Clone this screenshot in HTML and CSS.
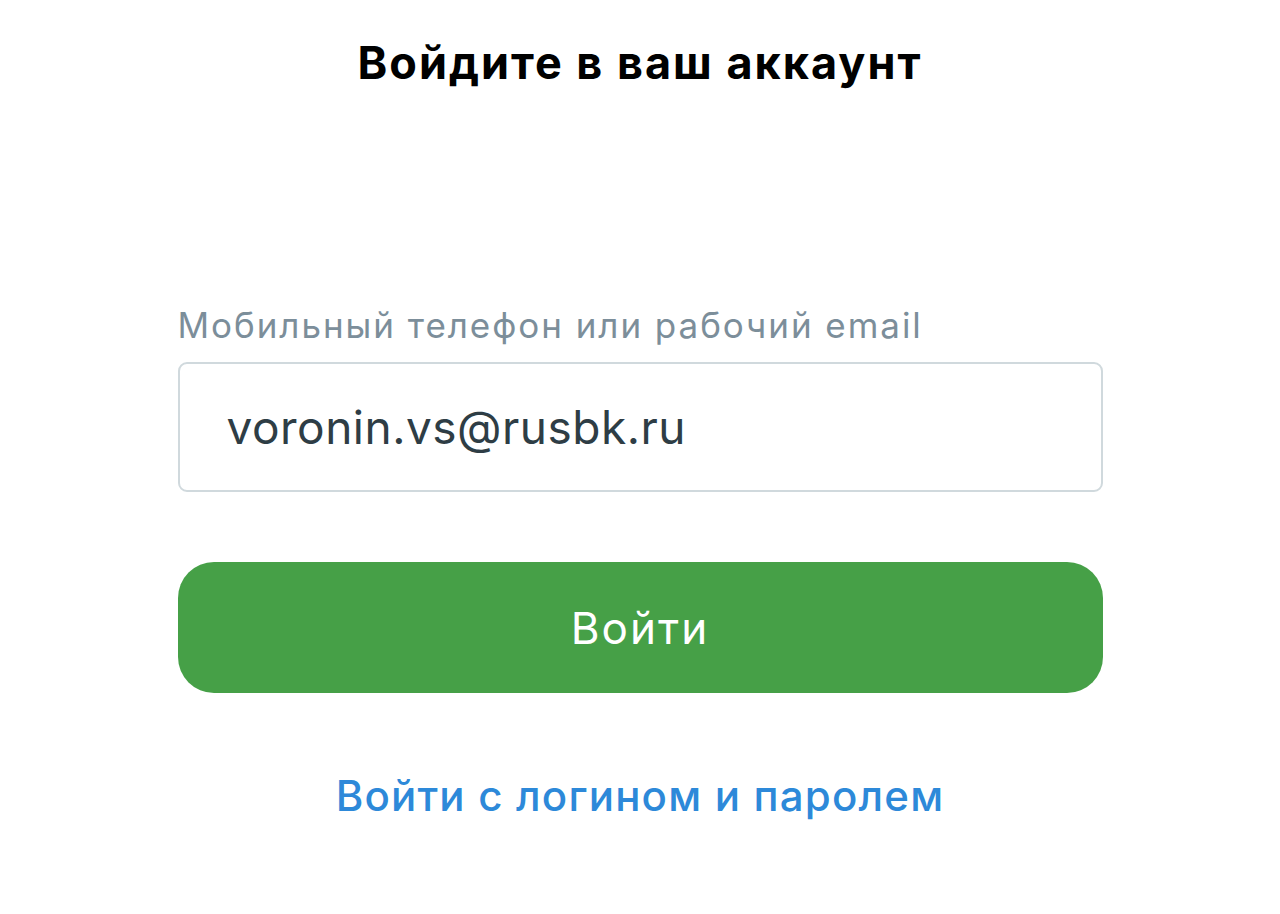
FILE: index.html
```html
<!DOCTYPE html>
<html lang="ru">
<head>
    <meta charset="UTF-8">
    <meta name="viewport" content="width=device-width, initial-scale=1.0">
    <title>Вход</title>
    <link rel="stylesheet" href="styles.css">
</head>
<body>
    <h1 class="title">Войдите в ваш аккаунт</h1>

    <div class="form">
        <label for="login" class="label">Мобильный телефон или рабочий email</label>
        <input type="text" id="login" class="field" value="voronin.vs@rusbk.ru">

        <button class="btn">Войти</button>

        <a href="#" class="alt-link">Войти с логином и паролем</a>
    </div>
</body>
</html>
```

FILE: styles.css
```css
body {
    margin: 0;
    font-family: Inter, "Noto Sans", sans-serif;
    background-color: #ffffff;
    color: #000;
}
.title {
    margin: 0;
    padding-top: 35px;
    text-align: center;
    font-size: 45px;
    font-weight: 700;
    line-height: 56px;
    letter-spacing: 2px;
}
.form {
    width: 925px;
    margin: 0 auto;
    padding-top: 211px;
    display: flex;
    flex-direction: column;
}
.label {
    color: #7c8e9a;
    font-size: 35px;
    line-height: 46px;
    letter-spacing: 1.95px;
    margin-bottom: 14px;
}
.field {
    box-sizing: border-box;
    height: 130px;
    padding: 0 47px;
    border: 2px solid #d0d9dd;
    border-radius: 9px;
    font-family: inherit;
    font-size: 46px;
    letter-spacing: 0.5px;
    color: #2e3d45;
    outline: none;
}
.btn {
    height: 131px;
    margin-top: 70px;
    border: none;
    border-radius: 36px;
    background-color: #46a047;
    color: #ffffff;
    font-family: inherit;
    font-size: 44px;
    letter-spacing: 2px;
    cursor: pointer;
}
.alt-link {
    margin-top: 77px;
    text-align: center;
    color: #2d89d9;
    font-size: 42px;
    font-weight: 500;
    letter-spacing: 1.2px;
    text-decoration: none;
}
```
